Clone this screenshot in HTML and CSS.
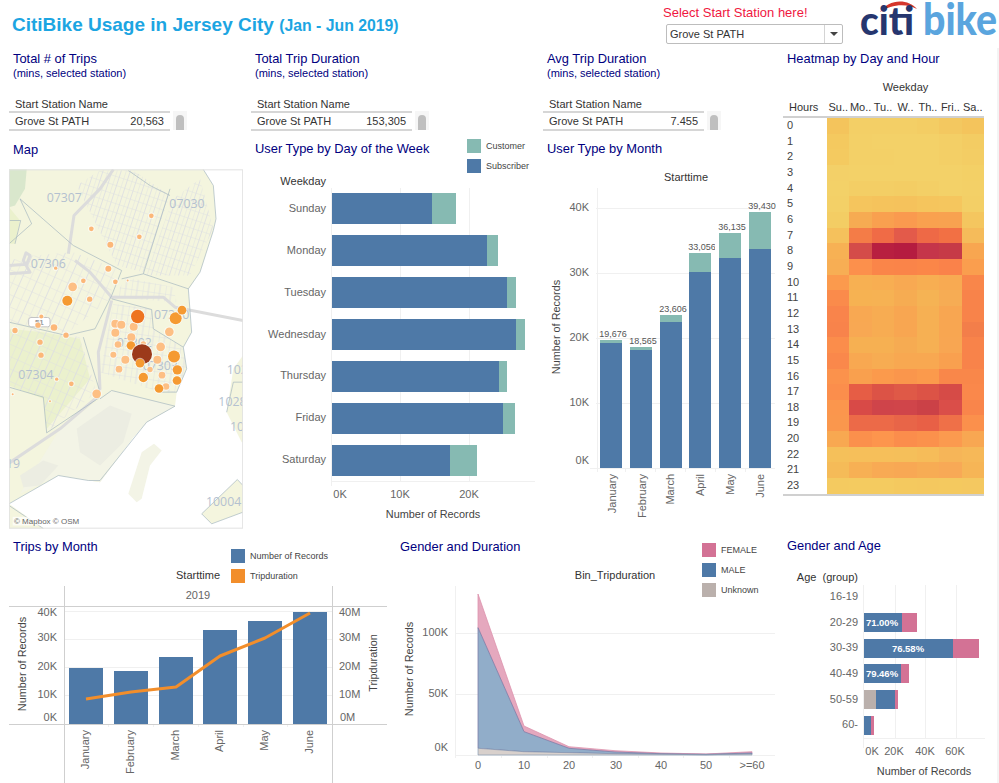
FILE: index.html
```html
<!DOCTYPE html>
<html lang="en">
<head>
<meta charset="utf-8">
<title>CitiBike Usage in Jersey City</title>
<link rel="stylesheet" href="styles.css">
</head>
<body>
<div class="dashboard">
  <header class="top">
    <h1 class="main-title">CitiBike Usage in Jersey City <span class="main-sub">(Jan - Jun 2019)</span></h1>
    <div class="picker">
      <div class="picker-label">Select Start Station here!</div>
      <div class="dropdown"><span class="dropdown-value">Grove St PATH</span><span class="dropdown-btn"><span class="caret"></span></span></div>
    </div>
    <svg class="logo" viewBox="859 0 140 48" width="140" height="48" aria-label="citi bike">
      <path class="logo-arc" d="M880 12C888 -1 908 -2 917 9C907 3 891 4 880 12Z"/>
      <text class="logo-citi" x="860" y="35" textLength="54" lengthAdjust="spacingAndGlyphs">citi</text>
      <text class="logo-bike" x="923" y="35" textLength="74" lengthAdjust="spacingAndGlyphs">bike</text>
    </svg>
  </header>

  <main class="board">
    <section class="upper">
      <div class="kpi">
        <h2 class="title">Total # of Trips</h2>
        <p class="subtitle">(mins, selected station)</p>
        <div class="kpi-table">
          <div class="kpi-body">
            <div class="kpi-head">Start Station Name</div>
            <div class="kpi-row"><span>Grove St PATH</span><span>20,563</span></div>
          </div>
          <div class="scroll"><span class="thumb"></span></div>
        </div>
      </div>
      <div class="kpi">
        <h2 class="title">Total Trip Duration</h2>
        <p class="subtitle">(mins, selected station)</p>
        <div class="kpi-table">
          <div class="kpi-body">
            <div class="kpi-head">Start Station Name</div>
            <div class="kpi-row"><span>Grove St PATH</span><span>153,305</span></div>
          </div>
          <div class="scroll"><span class="thumb"></span></div>
        </div>
      </div>
      <div class="kpi">
        <h2 class="title">Avg Trip Duration</h2>
        <p class="subtitle">(mins, selected station)</p>
        <div class="kpi-table">
          <div class="kpi-body">
            <div class="kpi-head">Start Station Name</div>
            <div class="kpi-row"><span>Grove St PATH</span><span>7.455</span></div>
          </div>
          <div class="scroll"><span class="thumb"></span></div>
        </div>
      </div>

      <div class="heat-panel">
        <h2 class="title">Heatmap by Day and Hour</h2>
        <div class="heat-weekday">Weekday</div>
        <div class="heat">
          <div class="heat-head"><span class="heat-hours">Hours</span><span>Su..</span><span>Mo..</span><span>Tu..</span><span>W..</span><span>Th..</span><span>Fri..</span><span>Sa..</span></div>
          <div class="heat-grid">
            <span>0</span><i style="background:#f4c45c"></i><i style="background:#f3cf66"></i><i style="background:#f3cf66"></i><i style="background:#f3cf66"></i><i style="background:#f3cd64"></i><i style="background:#f3c860"></i><i style="background:#f4c45c"></i>
            <span>1</span><i style="background:#f4c95f"></i><i style="background:#f3d067"></i><i style="background:#f3d168"></i><i style="background:#f3d168"></i><i style="background:#f3d168"></i><i style="background:#f3cf66"></i><i style="background:#f3cc63"></i>
            <span>2</span><i style="background:#f4ca60"></i><i style="background:#f3d067"></i><i style="background:#f3d067"></i><i style="background:#f3d168"></i><i style="background:#f3d168"></i><i style="background:#f3cf66"></i><i style="background:#f3cd64"></i>
            <span>3</span><i style="background:#f3d068"></i><i style="background:#f3d168"></i><i style="background:#f3d168"></i><i style="background:#f3d168"></i><i style="background:#f3d168"></i><i style="background:#f3d168"></i><i style="background:#f3d066"></i>
            <span>4</span><i style="background:#f3d168"></i><i style="background:#f3ce65"></i><i style="background:#f3ce65"></i><i style="background:#f3cd64"></i><i style="background:#f3cf66"></i><i style="background:#f3d168"></i><i style="background:#f3d067"></i>
            <span>5</span><i style="background:#f3d067"></i><i style="background:#f5c55d"></i><i style="background:#f5c35c"></i><i style="background:#f5c25c"></i><i style="background:#f5c55d"></i><i style="background:#f5c65e"></i><i style="background:#f3cf66"></i>
            <span>6</span><i style="background:#f3cd64"></i><i style="background:#f6ab52"></i><i style="background:#f9a04f"></i><i style="background:#fa9a4f"></i><i style="background:#f9a14f"></i><i style="background:#f8a250"></i><i style="background:#f4c65f"></i>
            <span>7</span><i style="background:#f5c15c"></i><i style="background:#f47c47"></i><i style="background:#f06b46"></i><i style="background:#e35a4a"></i><i style="background:#ee6946"></i><i style="background:#f27044"></i><i style="background:#f5bb5a"></i>
            <span>8</span><i style="background:#f7b154"></i><i style="background:#d44c49"></i><i style="background:#b81f40"></i><i style="background:#b51c40"></i><i style="background:#c5354a"></i><i style="background:#c63a47"></i><i style="background:#f8a650"></i>
            <span>9</span><i style="background:#f7ae54"></i><i style="background:#fc904c"></i><i style="background:#fa8549"></i><i style="background:#fa8449"></i><i style="background:#fb8648"></i><i style="background:#fa824a"></i><i style="background:#fa9e4e"></i>
            <span>10</span><i style="background:#fb9a4d"></i><i style="background:#f7b052"></i><i style="background:#f8ae52"></i><i style="background:#f8a952"></i><i style="background:#f7ae52"></i><i style="background:#f8aa52"></i><i style="background:#f9864a"></i>
            <span>11</span><i style="background:#fa8b4b"></i><i style="background:#f6b252"></i><i style="background:#f6b253"></i><i style="background:#f6ac52"></i><i style="background:#f5b354"></i><i style="background:#f6ac54"></i><i style="background:#f8834a"></i>
            <span>12</span><i style="background:#f9844b"></i><i style="background:#f8a852"></i><i style="background:#f7ac52"></i><i style="background:#f8a651"></i><i style="background:#f6b053"></i><i style="background:#f8a651"></i><i style="background:#f8834a"></i>
            <span>13</span><i style="background:#f8834b"></i><i style="background:#f8a853"></i><i style="background:#f7ac52"></i><i style="background:#f8a651"></i><i style="background:#f6b053"></i><i style="background:#f8a651"></i><i style="background:#f37e4a"></i>
            <span>14</span><i style="background:#fb8d4b"></i><i style="background:#f6b052"></i><i style="background:#f6b052"></i><i style="background:#f6ab52"></i><i style="background:#f6b053"></i><i style="background:#f8a652"></i><i style="background:#f8834a"></i>
            <span>15</span><i style="background:#fa884b"></i><i style="background:#f8a851"></i><i style="background:#f7ac52"></i><i style="background:#f8a851"></i><i style="background:#f8a851"></i><i style="background:#f9a04f"></i><i style="background:#f8834a"></i>
            <span>16</span><i style="background:#fb924c"></i><i style="background:#f9a04e"></i><i style="background:#fb9a4c"></i><i style="background:#fa964c"></i><i style="background:#fb9a4c"></i><i style="background:#f9874a"></i><i style="background:#f9874a"></i>
            <span>17</span><i style="background:#fb8e4c"></i><i style="background:#e65d45"></i><i style="background:#dc5346"></i><i style="background:#df5947"></i><i style="background:#dc5346"></i><i style="background:#d64b47"></i><i style="background:#fa884b"></i>
            <span>18</span><i style="background:#fb964d"></i><i style="background:#d84a47"></i><i style="background:#cf444a"></i><i style="background:#d0454a"></i><i style="background:#cb4147"></i><i style="background:#da4e49"></i><i style="background:#f9854b"></i>
            <span>19</span><i style="background:#fa974d"></i><i style="background:#ec6a48"></i><i style="background:#ec6a48"></i><i style="background:#e86548"></i><i style="background:#e86046"></i><i style="background:#ef7048"></i><i style="background:#fb904c"></i>
            <span>20</span><i style="background:#f8a851"></i><i style="background:#fb904c"></i><i style="background:#fd954d"></i><i style="background:#fb8d4c"></i><i style="background:#fb914c"></i><i style="background:#fb9a4f"></i><i style="background:#f8a752"></i>
            <span>22</span><i style="background:#f5c05a"></i><i style="background:#f6bf5a"></i><i style="background:#f6bf5a"></i><i style="background:#f5bf5a"></i><i style="background:#f6bc59"></i><i style="background:#f6b558"></i><i style="background:#f6b858"></i>
            <span>21</span><i style="background:#f5bb58"></i><i style="background:#f7b054"></i><i style="background:#f8aa54"></i><i style="background:#f8a854"></i><i style="background:#f7ac54"></i><i style="background:#f8a956"></i><i style="background:#f6b556"></i>
            <span>23</span><i style="background:#f4ca60"></i><i style="background:#f4cb60"></i><i style="background:#f4cb60"></i><i style="background:#f4c95f"></i><i style="background:#f4c85f"></i><i style="background:#f4c95f"></i><i style="background:#f4c860"></i>
          </div>
        </div>
      </div>

      <div class="chart-panel map-panel">
        <h2 class="title">Map</h2>
        <svg class="map" viewBox="27 12 702 1077" width="234" height="360" role="img" aria-label="Map of Jersey City stations">
          <defs>
            <pattern id="streetsA" width="26" height="26" patternUnits="userSpaceOnUse" patternTransform="rotate(18)"><path class="street" d="M0 0H26M0 0V26M13 0V26"/></pattern>
            <pattern id="streetsB" width="34" height="26" patternUnits="userSpaceOnUse" patternTransform="rotate(8)"><path class="street" d="M0 0H34M0 0V26M17 0V26"/></pattern>
            <pattern id="streetsC" width="44" height="34" patternUnits="userSpaceOnUse" patternTransform="rotate(24)"><path class="street" d="M0 0H44M0 0V34M22 0V34"/></pattern>
          </defs>
          <rect class="map-water" x="27" y="12" width="702" height="1077"/>
          <path class="land" d="M27 12H610L640 60L648 160L640 195L610 290L600 320L565 372L575 500L550 545L560 610L530 680L525 722L440 770L400 815L300 950L175 930L27 1015Z"/>
          <path class="land" d="M27 1015L130 1089H27Z"/>
          <path class="land" d="M729 570L700 610L680 740L725 830H729Z"/>
          <path class="land" d="M605 1045L712 942L729 960V1040L635 1075Z"/>
          <path class="land-pale" d="M425 860L462 835L485 855L450 900L425 1000L410 1010L385 985Z"/>
          <path class="land-pale" d="M300 700L335 675L525 722L440 770L400 815L300 950L175 930L60 985L180 790Z"/>
          <path class="land-grey" d="M230 790L330 720L395 745L370 830L300 900L240 860Z"/>
          <path class="land-grey" d="M60 930L130 885L175 900L120 960L70 965Z"/>
          <path class="land-green" d="M27 12H80L75 70L45 120L27 125Z"/>
          <path class="land-lime" d="M27 125L60 165L45 235H27Z"/>
          <path class="land-lime" d="M27 490L130 500L240 520L270 640L140 790L130 700L27 660Z"/>
          <path fill="url(#streetsA)" d="M430 330L520 100L600 40L640 190L570 330Z"/>
          <path fill="url(#streetsA)" d="M230 60L300 15H400L510 90L430 320L350 300Z"/>
          <path fill="url(#streetsC)" d="M27 285L100 270L220 260L350 310L330 400L200 505L27 470Z"/>
          <path fill="url(#streetsB)" d="M340 415L455 430L460 490L550 545L560 610L525 680L480 680L300 620Z"/>
          <path fill="url(#streetsB)" d="M380 335L520 365L530 410L340 395Z"/>
          <path fill="url(#streetsC)" d="M27 480L240 515L290 680L140 800L130 695L27 665Z"/>
          <path class="road" d="M27 300L80 296L90 270L78 262L70 285L90 320L27 325"/>
          <path class="road" d="M225 285L270 320L335 395L490 395L525 425L729 465"/>
          <path class="road" d="M205 265L222 150L300 70L340 12"/>
          <path class="road" d="M335 405L295 560L300 670L285 700L180 790L27 893"/>
          <path class="boundary" d="M60 100L220 240L365 315L335 390L285 490L200 510L27 470"/>
          <path class="boundary" d="M385 15L450 60L510 90M510 70L430 325L365 340"/>
          <path class="boundary" d="M430 325L565 370L575 500L550 545L560 610L530 680L480 680"/>
          <path class="boundary" d="M335 400L455 432L460 490L550 545"/>
          <path class="boundary" d="M250 515L300 680M300 700L335 675L525 722L440 770L300 945L265 945L175 930L27 1015"/>
          <path class="boundary" d="M27 665L130 695L140 802L300 695"/>
          <path class="boundary" d="M610 12L640 60L648 160L640 195L600 320L565 370"/>
          <path class="boundary" d="M60 100L95 175L27 235M27 165H62L45 235"/>
          <path class="boundary" d="M605 1045L712 942L729 960M605 1045L635 1075L729 1040"/>
          <path class="boundary" d="M27 1020L130 1089M729 650H700L680 740"/>
          <text class="zip" x="140" y="108">07307</text>
          <text class="zip" x="508" y="127">07030</text>
          <text class="zip" x="92" y="307">07306</text>
          <text class="zip" x="462" y="460">07310</text>
          <text class="zip" x="350" y="545">07302</text>
          <text class="zip" x="428" y="612">07303</text>
          <text class="zip" x="55" y="640">07304</text>
          <text class="zip" x="680" y="625">102</text>
          <text class="zip" x="655" y="722">1028</text>
          <text class="zip" x="690" y="795">10</text>
          <text class="zip" x="618" y="1022">10004</text>
          <text class="zip" x="18" y="908">19</text>
          <rect class="shield" x="86" y="456" width="64" height="28" rx="7"/>
          <text class="shield-text" x="118" y="478">51</text>
          <g class="dots-sm">
            <circle cx="454" cy="151" r="7"/><circle cx="274" cy="190" r="7"/><circle cx="418" cy="214" r="7"/><circle cx="331" cy="238" r="9"/><circle cx="167" cy="308" r="5"/><circle cx="325" cy="310" r="9"/><circle cx="250" cy="346" r="7"/><circle cx="346" cy="349" r="7"/><circle cx="383" cy="345" r="3"/><circle cx="269" cy="401" r="8"/><circle cx="124" cy="453" r="6"/><circle cx="114" cy="479" r="8"/><circle cx="162" cy="486" r="10"/><circle cx="45" cy="495" r="8"/><circle cx="198" cy="509" r="8"/><circle cx="120" cy="530" r="8"/><circle cx="123" cy="569" r="8"/><circle cx="170" cy="641" r="5"/><circle cx="214" cy="655" r="7"/><circle cx="38" cy="686" r="3"/><circle cx="150" cy="707" r="3"/>
          </g>
          <g class="dots-lt">
            <circle cx="218" cy="364" r="13"/><circle cx="346" cy="475" r="12"/><circle cx="364" cy="478" r="12"/><circle cx="346" cy="502" r="12"/><circle cx="401" cy="484" r="12"/><circle cx="394" cy="515" r="12"/><circle cx="354" cy="537" r="10"/><circle cx="340" cy="568" r="9"/><circle cx="376" cy="583" r="12"/><circle cx="357" cy="611" r="10"/><circle cx="482" cy="544" r="13"/><circle cx="472" cy="583" r="12"/><circle cx="508" cy="499" r="13"/><circle cx="486" cy="629" r="10"/><circle cx="498" cy="663" r="10"/><circle cx="290" cy="685" r="13"/><circle cx="450" cy="612" r="8"/><circle cx="430" cy="535" r="8"/>
          </g>
          <g class="dots-md">
            <circle cx="202" cy="406" r="15"/><circle cx="522" cy="573" r="18"/><circle cx="527" cy="458" r="18"/><circle cx="546" cy="434" r="13"/><circle cx="532" cy="613" r="14"/><circle cx="531" cy="645" r="13"/><circle cx="477" cy="669" r="13"/><circle cx="430" cy="636" r="14"/><circle cx="393" cy="540" r="13"/>
          </g>
          <circle class="dot-hi" cx="413" cy="453" r="20"/>
          <circle class="dot-top" cx="426" cy="566" r="30"/>
          <g class="dots-md"><circle cx="420" cy="593" r="13"/></g>
          <rect class="attrib-bg" x="38" y="1054" width="178" height="26"/>
          <text class="attrib" x="42" y="1075">© Mapbox © OSM</text>
          <rect class="map-frame" x="28" y="13" width="700" height="1075"/>
        </svg>
      </div>

      <div class="chart-panel">
        <h2 class="title">User Type by Day of the Week</h2>
        <div class="legend legend-week">
          <div class="legend-row"><span class="swatch sw-cust"></span>Customer</div>
          <div class="legend-row"><span class="swatch sw-sub"></span>Subscriber</div>
        </div>
        <svg class="chart" viewBox="244 157 292 378" width="292" height="378" role="img" aria-label="User type by day of the week">
          <path class="grid" d="M331.5 188V486M400.5 188V481M469.5 188V481M331 481.5H535"/>
          <text class="h end" x="326" y="185">Weekday</text>
          <rect class="sub" x="332" y="193" width="100" height="31"/><rect class="cust" x="432" y="193" width="24" height="31"/>
          <rect class="sub" x="332" y="235" width="155" height="31"/><rect class="cust" x="487" y="235" width="11" height="31"/>
          <rect class="sub" x="332" y="277" width="175" height="31"/><rect class="cust" x="507" y="277" width="9" height="31"/>
          <rect class="sub" x="332" y="319" width="184" height="31"/><rect class="cust" x="516" y="319" width="9" height="31"/>
          <rect class="sub" x="332" y="361" width="167" height="31"/><rect class="cust" x="499" y="361" width="8" height="31"/>
          <rect class="sub" x="332" y="403" width="171" height="31"/><rect class="cust" x="503" y="403" width="12" height="31"/>
          <rect class="sub" x="332" y="445" width="118" height="31"/><rect class="cust" x="450" y="445" width="27" height="31"/>
          <text class="t end" x="326" y="212">Sunday</text>
          <text class="t end" x="326" y="254">Monday</text>
          <text class="t end" x="326" y="296">Tuesday</text>
          <text class="t end" x="326" y="338">Wednesday</text>
          <text class="t end" x="326" y="379">Thursday</text>
          <text class="t end" x="326" y="421">Friday</text>
          <text class="t end" x="326" y="463">Saturday</text>
          <text class="t mid" x="340" y="498">0K</text>
          <text class="t mid" x="400" y="498">10K</text>
          <text class="t mid" x="469" y="498">20K</text>
          <text class="ax mid" x="433" y="518">Number of Records</text>
        </svg>
      </div>

      <div class="chart-panel">
        <h2 class="title">User Type by Month</h2>
        <svg class="chart" viewBox="536 157 240 378" width="240" height="378" role="img" aria-label="User type by month">
          <defs><clipPath id="clipApr"><rect x="680" y="235" width="35" height="20"/></clipPath></defs>
          <path class="grid" d="M597.5 188V472M596 208.5H775M596 273.5H775M596 338.5H775M596 403.5H775M590 468.5H775M625.5 468V472M655.5 468V472M685.5 468V472M715.5 468V472M745.5 468V472"/>
          <text class="h mid" x="686" y="181">Starttime</text>
          <rect class="cust" x="600" y="340" width="22" height="3"/><rect class="sub" x="600" y="343" width="22" height="125"/>
          <rect class="cust" x="630" y="347" width="22" height="3"/><rect class="sub" x="630" y="350" width="22" height="118"/>
          <rect class="cust" x="660" y="315" width="22" height="7"/><rect class="sub" x="660" y="322" width="22" height="146"/>
          <rect class="cust" x="689" y="253" width="22" height="19"/><rect class="sub" x="689" y="272" width="22" height="196"/>
          <rect class="cust" x="719" y="233" width="22" height="25"/><rect class="sub" x="719" y="258" width="22" height="210"/>
          <rect class="cust" x="749" y="212" width="22" height="37"/><rect class="sub" x="749" y="249" width="22" height="219"/>
          <text class="n mid" x="613" y="337">19,676</text>
          <text class="n mid" x="643" y="344">18,565</text>
          <text class="n mid" x="673" y="312">23,606</text>
          <text class="n mid clip-apr" x="702" y="250">33,056</text>
          <text class="n mid" x="732" y="230">36,135</text>
          <text class="n mid" x="762" y="209">39,430</text>
          <text class="t end" x="589" y="211">40K</text>
          <text class="t end" x="589" y="276">30K</text>
          <text class="t end" x="589" y="341">20K</text>
          <text class="t end" x="589" y="406">10K</text>
          <text class="t end" x="589" y="464">0K</text>
          <text class="ax mid" transform="rotate(-90 560 327)" x="560" y="327">Number of Records</text>
          <text class="t end" transform="rotate(-90 616 474)" x="616" y="474">January</text>
          <text class="t end" transform="rotate(-90 646 474)" x="646" y="474">February</text>
          <text class="t end" transform="rotate(-90 674 474)" x="674" y="474">March</text>
          <text class="t end" transform="rotate(-90 704 474)" x="704" y="474">April</text>
          <text class="t end" transform="rotate(-90 734 474)" x="734" y="474">May</text>
          <text class="t end" transform="rotate(-90 764 474)" x="764" y="474">June</text>
        </svg>
      </div>
    </section>

    <section class="lower">
      <div class="chart-panel">
        <h2 class="title title-first">Trips by Month</h2>
        <div class="legend legend-trips">
          <div class="legend-row"><span class="swatch sw-sub"></span>Number of Records</div>
          <div class="legend-row"><span class="swatch sw-orange"></span>Tripduration</div>
        </div>
        <svg class="chart" viewBox="0 555 389 228" width="389" height="228" role="img" aria-label="Trips by month">
          <path class="grid" d="M64 611.5H332M64 639.5H332M64 667.5H332M64 695.5H332M108.5 724V727M153.5 724V727M198.5 724V727M243.5 724V727M287.5 724V727"/>
          <path class="rule" d="M64.5 586V783M332.5 586V783M9 606.5H387M9 724.5H387"/>
          <text class="h mid" x="198" y="579">Starttime</text>
          <text class="t mid" x="198" y="599">2019</text>
          <rect class="sub" x="69" y="668" width="34" height="56"/>
          <rect class="sub" x="114" y="671" width="34" height="53"/>
          <rect class="sub" x="159" y="657" width="34" height="67"/>
          <rect class="sub" x="203" y="630" width="34" height="94"/>
          <rect class="sub" x="248" y="621" width="34" height="103"/>
          <rect class="sub" x="293" y="612" width="34" height="112"/>
          <polyline class="trend" points="86,699 131,692 176,687 220,656 265,638 310,613"/>
          <text class="t end" x="57" y="616">40K</text>
          <text class="t end" x="57" y="641">30K</text>
          <text class="t end" x="57" y="670">20K</text>
          <text class="t end" x="57" y="698">10K</text>
          <text class="t end" x="57" y="721">0K</text>
          <text class="t" x="339" y="616">40M</text>
          <text class="t" x="339" y="641">30M</text>
          <text class="t" x="339" y="670">20M</text>
          <text class="t" x="339" y="698">10M</text>
          <text class="t" x="340" y="721">0M</text>
          <text class="ax mid" transform="rotate(-90 26 664)" x="26" y="664">Number of Records</text>
          <text class="ax mid" transform="rotate(-90 377 663)" x="377" y="663">Tripduration</text>
          <text class="t end" transform="rotate(-90 89 730)" x="89" y="730">January</text>
          <text class="t end" transform="rotate(-90 134 730)" x="134" y="730">February</text>
          <text class="t end" transform="rotate(-90 179 730)" x="179" y="730">March</text>
          <text class="t end" transform="rotate(-90 223 730)" x="223" y="730">April</text>
          <text class="t end" transform="rotate(-90 268 730)" x="268" y="730">May</text>
          <text class="t end" transform="rotate(-90 313 730)" x="313" y="730">June</text>
        </svg>
      </div>

      <div class="chart-panel">
        <h2 class="title">Gender and Duration</h2>
        <div class="legend legend-gender">
          <div class="legend-row"><span class="swatch sw-fem"></span>FEMALE</div>
          <div class="legend-row"><span class="swatch sw-sub"></span>MALE</div>
          <div class="legend-row"><span class="swatch sw-unk"></span>Unknown</div>
        </div>
        <svg class="chart" viewBox="389 555 387 228" width="387" height="228" role="img" aria-label="Gender and duration">
          <path class="grid" d="M455.5 586V758M455 633.5H775M455 694.5H775M455 755.5H775M501.5 755V758M547.5 755V758M592.5 755V758M638.5 755V758M683.5 755V758M729.5 755V758"/>
          <text class="h mid" x="615" y="579">Bin_Tripduration</text>
          <path class="area-fem" d="M478 594L524 726L569 746.7L615 750.7L661 753L706 754L752 751.7V753L706 754.3L661 753.7L615 752L569 748.3L524 731.7L478 627.7Z"/>
          <path class="area-male" d="M478 627.7L524 731.7L569 748.3L615 752L661 753.7L706 754.3L752 753V754L706 754.7L661 754.3L615 753.7L569 752.7L524 751.7L478 748.3Z"/>
          <path class="area-unk" d="M478 748.3L524 751.7L569 752.7L615 753.7L661 754.3L706 754.7L752 754V755H478Z"/>
          <text class="t end" x="448" y="636">100K</text>
          <text class="t end" x="448" y="697">50K</text>
          <text class="t end" x="448" y="751">0K</text>
          <text class="ax mid" transform="rotate(-90 413 669)" x="413" y="669">Number of Records</text>
          <text class="t mid" x="478" y="769">0</text>
          <text class="t mid" x="524" y="769">10</text>
          <text class="t mid" x="569" y="769">20</text>
          <text class="t mid" x="616" y="769">30</text>
          <text class="t mid" x="661" y="769">40</text>
          <text class="t mid" x="706" y="769">50</text>
          <text class="t mid" x="752" y="769">&gt;=60</text>
        </svg>
      </div>

      <div class="chart-panel age-panel">
        <h2 class="title">Gender and Age</h2>
        <svg class="chart" viewBox="776 554 221 229" width="221" height="229" role="img" aria-label="Gender and age">
          <path class="grid" d="M863.5 585V748M895.5 585V738M925.5 585V738M956.5 585V738M863 738.5H985"/>
          <text class="h end" x="858" y="581" xml:space="preserve">Age  (group)</text>
          <rect class="sub" x="864" y="613" width="38" height="19"/><rect class="fem" x="902" y="613" width="15" height="19"/>
          <rect class="sub" x="864" y="639" width="89" height="19"/><rect class="fem" x="953" y="639" width="26" height="19"/>
          <rect class="sub" x="864" y="664" width="37" height="19"/><rect class="fem" x="901" y="664" width="8" height="19"/>
          <rect class="unk" x="864" y="690" width="12" height="19"/><rect class="sub" x="876" y="690" width="19" height="19"/><rect class="fem" x="895" y="690" width="3" height="19"/>
          <rect class="sub" x="864" y="716" width="7" height="19"/><rect class="fem" x="871" y="716" width="3" height="19"/>
          <text class="pct mid" x="882" y="626">71.00%</text>
          <text class="pct mid" x="908" y="652">76.58%</text>
          <text class="pct mid" x="882" y="677">79.46%</text>
          <text class="t end" x="858" y="600">16-19</text>
          <text class="t end" x="858" y="626">20-29</text>
          <text class="t end" x="858" y="651">30-39</text>
          <text class="t end" x="858" y="677">40-49</text>
          <text class="t end" x="858" y="703">50-59</text>
          <text class="t end" x="858" y="728">60-</text>
          <text class="t mid" x="872" y="755">0K</text>
          <text class="t mid" x="894" y="755">20K</text>
          <text class="t mid" x="925" y="755">40K</text>
          <text class="t mid" x="955" y="755">60K</text>
          <text class="ax mid" x="924" y="775">Number of Records</text>
        </svg>
      </div>
    </section>
  </main>
</div>
</body>
</html>
```

FILE: styles.css
```css
* { box-sizing: border-box; }
html, body { margin: 0; padding: 0; background: #fff; }
body { font-family: "Liberation Sans", Arial, sans-serif; }

.dashboard { width: 999px; height: 783px; overflow: hidden; display: flex; flex-direction: column; }

/* header */
.top { height: 48px; flex: none; display: flex; padding-left: 12px; }
.main-title { margin: 0; padding-top: 13px; font-size: 19px; line-height: 24px; font-weight: 700; color: #1ca5e2; white-space: nowrap; }
.main-sub { font-size: 15.8px; }
.picker { margin-left: auto; width: 180px; padding-top: 5px; }
.picker-label { font-size: 13px; line-height: 15px; color: #f0173f; white-space: nowrap; }
.dropdown { margin: 4px 0 0 3px; width: 177px; height: 20px; border: 1px solid #bdbdbd; border-radius: 2px; display: flex; align-items: center; font-size: 11px; color: #333; }
.dropdown-value { flex: 1; padding-left: 3px; }
.dropdown-btn { width: 18px; height: 100%; border-left: 1px solid #d4d4d4; display: flex; align-items: center; justify-content: center; }
.caret { width: 0; height: 0; border-left: 4px solid transparent; border-right: 4px solid transparent; border-top: 4px solid #444; }
.logo { margin-left: 16px; display: block; flex: none; }
.logo-arc { fill: #d5362c; }
.logo-citi { font-family: "Lato", sans-serif; font-weight: 900; font-size: 40px; fill: #26366f; }
.logo-bike { font-family: "Lato", sans-serif; font-weight: 900; font-size: 43px; fill: #5aa5de; }

/* board */
.board { flex: 1; display: flex; flex-direction: column; border-right: 2px solid #f4f4f4; width: 999px; }
.upper { height: 487px; flex: none; padding-left: 2px; display: grid; grid-template-columns: 242px 292px 240px 221px; grid-template-rows: 88px 399px; }
.lower { height: 248px; flex: none; display: grid; grid-template-columns: 389px 387px 221px; }

.title { margin: 0; padding-left: 11px; font-size: 12.9px; line-height: 16px; font-weight: 400; color: #000080; white-space: nowrap; }
.title-first { padding-left: 13px; }
.subtitle { margin: 0; padding-left: 11px; font-size: 11px; line-height: 13px; color: #000080; white-space: nowrap; }

/* KPI */
.kpi { padding-top: 3px; }
.kpi-table { display: flex; margin: 17px 0 0 7px; }
.kpi-body { width: 161px; font-size: 11px; color: #333; }
.kpi-head { height: 14px; line-height: 14px; padding-left: 6px; }
.kpi-row { height: 20px; border-top: 2px solid #d6d6d6; border-bottom: 2px solid #d6d6d6; display: flex; justify-content: space-between; align-items: center; padding: 0 6px; }
.scroll { width: 14px; height: 19px; margin: 14px 0 0 3px; background: #f6f6f6; display: flex; justify-content: center; align-items: flex-end; }
.thumb { width: 8px; height: 15px; background: #bfbfbf; border-radius: 4px 4px 0 0; }

/* panels */
.chart-panel { position: relative; padding-top: 5px; }
.lower .chart-panel { padding-top: 4px; }
.chart { display: block; }
.map-panel .title { padding-left: 11px; padding-top: 1px; }
.map { display: block; margin: 11px 0 0 7px; }
.age-panel { margin-top: -1px; }

/* legends */
.legend { position: absolute; display: flex; flex-direction: column; gap: 6px; font-size: 9px; color: #444; }
.legend-row { display: flex; align-items: center; gap: 5px; height: 14px; white-space: nowrap; }
.swatch { width: 14px; height: 14px; flex: none; }
.legend-week { left: 223px; top: 3px; }
.legend-trips { left: 231px; top: 14px; }
.legend-gender { left: 313px; top: 8px; }
.sw-cust { background: #86bab2; }
.sw-sub { background: #4e79a7; }
.sw-orange { background: #f28e2b; }
.sw-fem { background: #d37295; }
.sw-unk { background: #bab0ac; }

/* heatmap */
.heat-panel { grid-column: 4; grid-row: 1 / 3; padding-top: 3px; }
.heat-weekday { margin: 13px 0 0 7px; width: 201px; padding-left: 44px; text-align: center; font-size: 11px; line-height: 14px; color: #333; }
.heat { margin-left: 7px; width: 201px; font-size: 11px; color: #333; }
.heat-head { display: grid; grid-template-columns: 44px repeat(7, 1fr); padding-top: 6px; height: 24px; line-height: 14px; border-bottom: 2px solid #d0d0d0; text-align: center; white-space: nowrap; }
.heat-hours { text-align: left; padding-left: 6px; }
.heat-grid { display: grid; grid-template-columns: 44px repeat(7, 1fr); grid-auto-rows: 15.667px; height: 378px; border-bottom: 2px solid #d0d0d0; line-height: 15.667px; }
.heat-grid span { padding-left: 4px; color: #444; }
.heat-grid i { display: block; }

/* svg text */
.chart text, .map text { font-family: "Liberation Sans", Arial, sans-serif; }
.t { font-size: 11px; fill: #666; }
.h { font-size: 11px; fill: #333; }
.ax { font-size: 10.9px; fill: #444; }
.n { font-size: 9px; fill: #555; }
.pct { font-size: 9.5px; font-weight: 700; fill: #fff; }
.end { text-anchor: end; }
.mid { text-anchor: middle; }
.clip-apr { clip-path: url(#clipApr); }

.grid { fill: none; stroke: #f0f0f0; stroke-width: 1; }
.rule { fill: none; stroke: #cfcfcf; stroke-width: 1; }
.sub { fill: #4e79a7; }
.cust { fill: #86bab2; }
.fem { fill: #d37295; }
.unk { fill: #bab0ac; }
.trend { fill: none; stroke: #f28e2b; stroke-width: 3; stroke-linejoin: round; }
.area-fem { fill: #e5a8be; stroke: #dd93ad; stroke-width: .8; }
.area-male { fill: #91adc9; stroke: #7f7fa8; stroke-width: .8; }
.area-unk { fill: #d8d0cc; stroke: #7d95b0; stroke-width: .6; }

/* map */
.map-water { fill: #fff; }
.land { fill: #f4f5de; }
.land-pale { fill: #f3f4e6; }
.land-grey { fill: #ecede2; }
.land-green { fill: #d9e7cc; }
.land-lime { fill: #ebf1cd; }
.street { fill: none; stroke: #dcdde2; stroke-width: 2.4; }
.road { fill: none; stroke: #dcdcdc; stroke-width: 9; stroke-linejoin: round; }
.boundary { fill: none; stroke: #a3b5be; stroke-width: 2; stroke-linejoin: round; }
.map .zip { font-family: "Open Sans", sans-serif; font-size: 37px; fill: #b4c1d0; }
.shield { fill: #fff; stroke: #c4c4c4; stroke-width: 3; }
.map .shield-text { font-size: 24px; font-weight: 700; text-anchor: middle; fill: #999; }
.dots-sm circle, .dots-lt circle, .dots-md circle, .dot-hi, .dot-top { stroke: #fff; stroke-opacity: .6; stroke-width: 6; paint-order: stroke; }
.dots-sm circle { fill: #fcb778; }
.dots-lt circle { fill: #fdbf84; }
.dots-md circle { fill: #f59a32; }
.dot-hi { fill: #ee7420; }
.dot-top { fill: #9c3a1b; }
.attrib-bg { fill: #fff; fill-opacity: .7; }
.map .attrib { font-size: 24px; fill: #666; }
.map-frame { fill: none; stroke: #e2e2e2; stroke-width: 3; }
```
